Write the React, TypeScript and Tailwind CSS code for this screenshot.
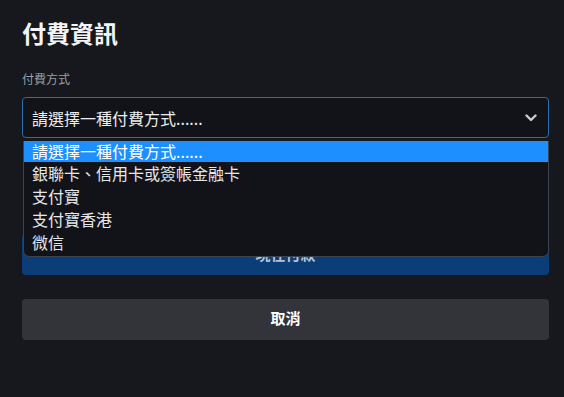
const options = [
  "請選擇一種付費方式......",
  "銀聯卡、信用卡或簽帳金融卡",
  "支付寶",
  "支付寶香港",
  "微信",
];

function Chevron() {
  return (
    <svg width="12" height="8" viewBox="0 0 12 8" fill="none">
      <path d="M1.5 1.5 L6 6 L10.5 1.5" stroke="#c9ccd2" strokeWidth="2.4" strokeLinecap="round" strokeLinejoin="round" />
    </svg>
  );
}

export default function App() {
  return (
    <div
      className="h-[397px] w-full bg-[#16181e] pl-[22px] pr-[15px] pt-[20px] text-white"
      style={{ fontFamily: '"Noto Sans CJK TC", "Noto Sans", sans-serif' }}
    >
      <h1 className="text-[24px] font-bold leading-[26px] text-[#f3f4f6]">付費資訊</h1>

      <div className="mt-[25px] text-[12px] leading-[16px] text-[#9aa0a8]">付費方式</div>

      <div className="relative mt-[10px]">
        <div className="flex h-[41px] items-center justify-between rounded-[4px] border border-[#2b6cb0] bg-[#111318] pl-[9px] pr-[11px]">
          <span className="text-[16px] leading-none text-[#eceef1]">請選擇一種付費方式......</span>
          <Chevron />
        </div>

        <div className="absolute left-[1px] right-0 top-[44px] z-10 rounded-b-[6px] border border-t-0 border-[#3b4250] bg-[#121318] pb-[2px]">
          {options.map((o, i) => (
            <div
              key={o}
              className={
                i === 0
                  ? "bg-[#1e8fff] pl-[8px] text-[16px] leading-[21px] text-white"
                  : "pl-[8px] text-[16px] leading-[23px] text-[#e6e7ea]"
              }
            >
              {o}
            </div>
          ))}
        </div>
      </div>

      <button className="mt-[96px] flex h-[41px] w-full items-center justify-center rounded-[4px] bg-[#0b3d78] text-[15px] font-bold text-[#b3c4d8]">
        現在付款
      </button>

      <button className="mt-[24px] flex h-[41px] w-full items-center justify-center rounded-[4px] bg-[#323439] pb-[2px] text-[15px] font-bold text-white">
        取消
      </button>
    </div>
  );
}
